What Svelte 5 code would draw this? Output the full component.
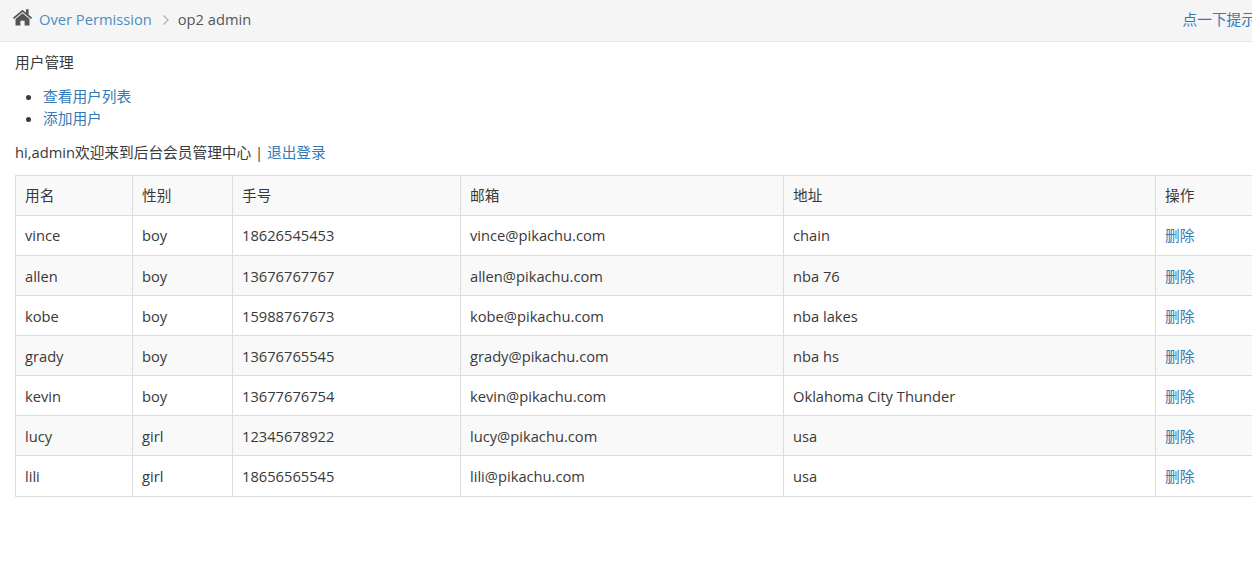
<script lang="ts">
  const users = [
    { name: "vince", sex: "boy", phone: "18626545453", email: "vince@pikachu.com", address: "chain" },
    { name: "allen", sex: "boy", phone: "13676767767", email: "allen@pikachu.com", address: "nba 76" },
    { name: "kobe", sex: "boy", phone: "15988767673", email: "kobe@pikachu.com", address: "nba lakes" },
    { name: "grady", sex: "boy", phone: "13676765545", email: "grady@pikachu.com", address: "nba hs" },
    { name: "kevin", sex: "boy", phone: "13677676754", email: "kevin@pikachu.com", address: "Oklahoma City Thunder" },
    { name: "lucy", sex: "girl", phone: "12345678922", email: "lucy@pikachu.com", address: "usa" },
    { name: "lili", sex: "girl", phone: "18656565545", email: "lili@pikachu.com", address: "usa" },
  ];
</script>

<div class="page">
  <div class="breadcrumbs">
    <svg class="home" viewBox="0 0 24 20" width="21" height="18" aria-hidden="true">
      <path d="M12 1.600 1 10.800l1.300 1.500L12 4.200l9.700 8.100 1.300-1.500-4-3.300V1.200h-3v3.800z" />
      <path d="M12 5.600 4 12.300V19.600h5.600v-5.400h4.800v5.400H20v-7.300z" />
    </svg>
    <a href="#top" class="crumb">Over Permission</a>
    <svg class="chevron" viewBox="0 0 8 12" width="8" height="12" aria-hidden="true">
      <path d="M1.500 1.500 6 6l-4.500 4.500" />
    </svg>
    <span class="current">op2 admin</span>
    <a href="#top" class="tip">点一下提示</a>
  </div>

  <div class="content">
    <p class="title">用户管理</p>
    <ul>
      <li><a href="#top">查看用户列表</a></li>
      <li><a href="#top">添加用户</a></li>
    </ul>
    <p class="welcome">hi,admin欢迎来到后台会员管理中心 | <a href="#top">退出登录</a></p>

    <table>
      <colgroup>
        <col class="c1" /><col class="c2" /><col class="c3" /><col class="c4" /><col class="c5" /><col class="c6" />
      </colgroup>
      <thead>
        <tr><th>用名</th><th>性别</th><th>手号</th><th>邮箱</th><th>地址</th><th>操作</th></tr>
      </thead>
      <tbody>
        {#each users as u}
          <tr>
            <td>{u.name}</td>
            <td>{u.sex}</td>
            <td>{u.phone}</td>
            <td>{u.email}</td>
            <td>{u.address}</td>
            <td><a href="#top">删除</a></td>
          </tr>
        {/each}
      </tbody>
    </table>
  </div>
</div>

<style>
  :global(body) {
    margin: 0;
    background: #fff;
  }

  .page {
    width: 1252px;
    height: 565px;
    overflow: hidden;
    font-family: "Open Sans", "Noto Sans CJK SC", sans-serif;
    font-size: 14.7px;
    color: #393939;
  }

  a {
    color: #337ab7;
    text-decoration: none;
  }

  /* Breadcrumb bar */
  .breadcrumbs {
    display: flex;
    align-items: center;
    box-sizing: border-box;
    height: 42px;
    padding: 0 0 4px 12px;
    background: #f5f5f5;
    border-bottom: 1px solid #e5e5e5;
    white-space: nowrap;
  }

  .home {
    fill: #555;
    margin: -4px 6px 0 0;
  }

  .crumb {
    color: #4c8fbd;
  }

  .chevron {
    margin: 3px 8px 0 10px;
    fill: none;
    stroke: #b2b6bf;
    stroke-width: 1.4;
  }

  .current {
    color: #555;
  }

  .tip {
    margin-left: auto;
    margin-right: -4px;
  }

  /* Content */
  .content {
    padding-left: 15px;
  }

  .title {
    margin: 10px 0 0;
    line-height: 21px;
  }

  ul {
    margin: 12px 0 0;
    padding-left: 28px;
  }

  li {
    line-height: 22px;
  }

  .welcome {
    margin: 13px 0 0;
    line-height: 21px;
  }

  /* User table */
  table {
    table-layout: fixed;
    width: 1300px;
    margin-top: 11.7px;
    border-collapse: collapse;
  }

  .c1 { width: 117px; }
  .c2 { width: 100px; }
  .c3 { width: 228px; }
  .c4 { width: 323px; }
  .c5 { width: 372px; }
  .c6 { width: 160px; }

  th,
  td {
    padding: 9.6px 9px 9.4px;
    border: 1px solid #ddd;
    font-weight: 400;
    text-align: left;
    vertical-align: top;
    line-height: 20.125px;
  }

  thead tr,
  tbody tr:nth-child(even) {
    background: #f9f9f9;
  }
</style>
